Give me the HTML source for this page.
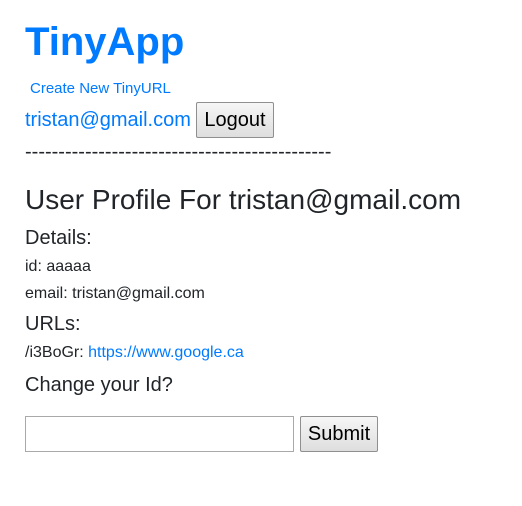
<!DOCTYPE html>
<html><head><style>
body{margin:0;width:522px;height:506px;background:#fff;font-family:"Liberation Sans",sans-serif;color:#212529;position:relative;overflow:hidden}
.a{position:absolute;left:25px;line-height:1;white-space:nowrap}
.b{color:#007bff}
.btn{position:absolute;box-sizing:border-box;border:1px solid #8f8f8f;border-radius:2px;background:linear-gradient(#f6f6f6,#dedede);font:20px "Liberation Sans",sans-serif;color:#000;display:flex;align-items:center;justify-content:center}
</style></head><body>
<div class="a b" style="top:22px;font-size:40px;font-weight:bold">TinyApp</div>
<div class="a b" style="top:81px;left:30px;font-size:15px">Create New TinyURL</div>
<div class="a b" style="top:110px;font-size:20px">tristan@gmail.com</div>
<div class="btn" style="left:196px;top:102px;width:78px;height:36px">Logout</div>
<div class="a" style="top:142px;font-size:20px">----------------------------------------------</div>
<div class="a" style="top:186px;font-size:28px">User Profile For tristan@gmail.com</div>
<div class="a" style="top:228px;font-size:20px">Details:</div>
<div class="a" style="top:259px;font-size:16px">id: aaaaa</div>
<div class="a" style="top:286px;font-size:16px">email: tristan@gmail.com</div>
<div class="a" style="top:314px;font-size:20px">URLs:</div>
<div class="a" style="top:345px;font-size:16px">/i3BoGr: <span class="b">https://www.google.ca</span></div>
<div class="a" style="top:375px;font-size:20px">Change your Id?</div>
<div style="position:absolute;left:25px;top:416px;width:269px;height:36px;box-sizing:border-box;border:1px solid #a9a9a9"></div>
<div class="btn" style="left:300px;top:416px;width:78px;height:36px">Submit</div>
</body></html>
